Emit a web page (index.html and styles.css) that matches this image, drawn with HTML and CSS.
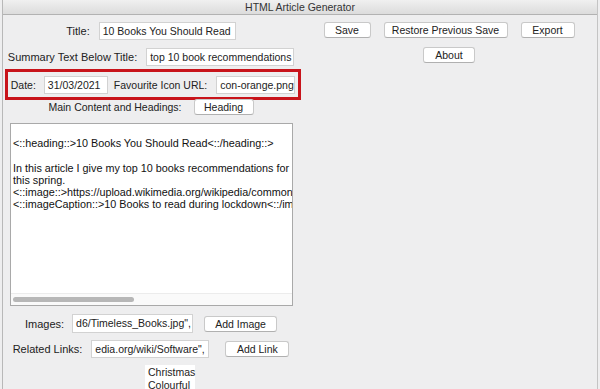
FILE: index.html
```html
<!DOCTYPE html>
<html lang="en">
<head>
    <meta charset="UTF-8">
    <title>HTML Article Generator</title>
    <link rel="stylesheet" href="styles.css">
</head>
<body>
    <div class="window">
        <div class="titlebar">HTML Article Generator</div>
        <div class="main">
            <div class="left">
                <div class="row row-title">
                    <span class="label">Title:</span>
                    <div class="field w-title">10 Books You Should Read</div>
                </div>
                <div class="row row-summary">
                    <span class="label">Summary Text Below Title:</span>
                    <div class="field w-summary">top 10 book recommendations</div>
                </div>
                <div class="row highlight">
                    <span class="label">Date:</span>
                    <div class="field w-date">31/03/2021</div>
                    <span class="label label-fav">Favourite Icon URL:</span>
                    <div class="field w-icon">con-orange.png</div>
                </div>
                <div class="row row-content">
                    <span class="label">Main Content and Headings:</span>
                    <button class="btn btn-heading">Heading</button>
                </div>
                <div class="editor">
                    <div class="editor-text">
&lt;::heading::&gt;10 Books You Should Read&lt;::/heading::&gt;

In this article I give my top 10 books recommendations for
this spring.
&lt;::image::&gt;https://upload.wikimedia.org/wikipedia/commons/a/a6/Timeless_Books.jpg
&lt;::imageCaption::&gt;10 Books to read during lockdown&lt;::/imageCaption::&gt;</div>
                    <div class="hscroll"><div class="thumb"></div></div>
                </div>
                <div class="row row-images">
                    <span class="label">Images:</span>
                    <div class="field w-images">d6/Timeless_Books.jpg",</div>
                    <button class="btn btn-addimg">Add Image</button>
                </div>
                <div class="row row-links">
                    <span class="label">Related Links:</span>
                    <div class="field w-links">edia.org/wiki/Software",</div>
                    <button class="btn btn-addlink">Add Link</button>
                </div>
                <div class="themes">
                    <div>Christmas</div>
                    <div>Colourful</div>
                </div>
            </div>
            <div class="right">
                <div class="btn-row">
                    <button class="btn btn-save">Save</button>
                    <button class="btn btn-restore">Restore Previous Save</button>
                    <button class="btn btn-export">Export</button>
                </div>
                <div class="btn-row btn-row-about">
                    <button class="btn btn-about">About</button>
                </div>
            </div>
        </div>
    </div>
</body>
</html>
```

FILE: styles.css
```css
body {
    margin: 0;
    width: 600px;
    height: 389px;
    overflow: hidden;
    background-color: #eeeeef;
    font-family: "Liberation Sans", Arial, sans-serif;
    font-size: 11px;
    color: #222;
}
.window {
    margin-left: 2px;
    width: 594px;
    height: 389px;
    border-left: 1px solid #b8b8b8;
    border-right: 1px solid #c4c4c4;
}
.titlebar {
    height: 14px;
    line-height: 14px;
    text-align: center;
    font-size: 10.5px;
    color: #333;
    background: linear-gradient(#f0f0f0, #dcdcdc);
    border-bottom: 1px solid #b2b2b2;
}
.main {
    display: flex;
}
.left {
    width: 296px;
    display: flex;
    flex-direction: column;
}
.right {
    flex: 1;
    padding-left: 2px;
}
.row {
    display: flex;
    justify-content: center;
    align-items: center;
}
.label {
    margin-right: 9px;
    white-space: nowrap;
}
.field {
    height: 18px;
    line-height: 17px;
    box-sizing: border-box;
    background: #fff;
    border: 1px solid #d2d2d2;
    padding: 0 3px;
    font-size: 10.5px;
    white-space: nowrap;
    overflow: hidden;
}
.row-title {
    margin-top: 7px;
}
.row-summary {
    margin-top: 8px;
}
.w-title { width: 137px; }
.w-summary { width: 148px; }
.w-date { width: 64px; }
.w-icon { width: 79px; }
.w-images { width: 121px; height: 19px; }
.w-links { width: 118px; }

.highlight {
    margin: 3px 0 0 2px;
    height: 31px;
    width: 296px;
    box-sizing: border-box;
    border: 3px solid #c8141b;
}
.highlight .label {
    margin-right: 8px;
    font-size: 10.5px;
}
.highlight .label-fav {
    margin-left: 6px;
    margin-right: 9px;
}

.btn {
    height: 16px;
    padding: 0;
    font-family: "Liberation Sans", Arial, sans-serif;
    font-size: 10.5px;
    color: #222;
    background: #fff;
    border: 1px solid #c9c9c9;
    border-bottom-color: #b0b0b0;
    border-radius: 3px;
    line-height: 14px;
    white-space: nowrap;
}
.row-content {
    margin-top: -1px;
}
.row-content .label {
    margin-right: 12px;
    font-size: 10.5px;
}
.btn-heading { width: 60px; }

.editor {
    margin: 8px 0 0 7px;
    width: 283px;
    height: 183px;
    box-sizing: border-box;
    border: 1px solid #a9a9a9;
    background: #fff;
    display: flex;
    flex-direction: column;
}
.editor-text {
    flex: 1;
    overflow: hidden;
    white-space: pre;
    padding: 1px 2px;
    font-size: 10.8px;
    line-height: 12.2px;
    color: #111;
}
.hscroll {
    height: 11px;
    border-top: 1px solid #ececec;
    background: #fafafa;
    display: flex;
    align-items: center;
    padding-left: 2px;
}
.thumb {
    width: 121px;
    height: 5px;
    border-radius: 3px;
    background: #b7b7b7;
}
.row-images {
    margin-top: 8px;
}
.row-images .label { margin-right: 8px; }
.btn-addimg { margin-left: 11px; width: 73px; }
.row-links {
    margin-top: 7px;
}
.btn-addlink { margin-left: 16px; width: 64px; }
.themes {
    margin: 7px 0 0 142px;
    width: 50px;
    padding: 1px 3px 0;
    box-sizing: border-box;
    background: #fff;
    font-size: 10.5px;
    line-height: 13px;
}

.btn-row {
    display: flex;
    justify-content: center;
    gap: 13px;
    margin-top: 7px;
}
.btn-row-about {
    margin-top: 9px;
}
.btn-save { width: 47px; }
.btn-restore { width: 124px; }
.btn-export { width: 54px; }
.btn-about { width: 52px; }
```
